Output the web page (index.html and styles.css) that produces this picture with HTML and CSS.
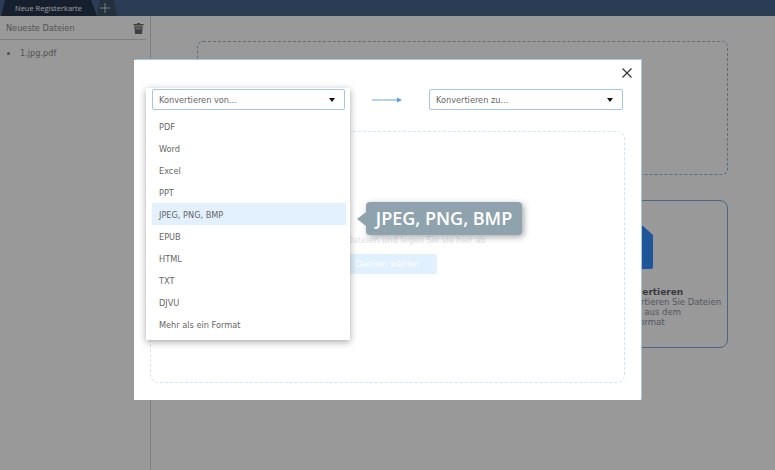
FILE: index.html
```html
<!DOCTYPE html>
<html>
<head>
	<title>Konvertieren</title>
	<link rel="stylesheet" href="styles.css">
</head>
<body>
	<div class="app">
		<div class="tabbar">
			<div class="tab">Neue Registerkarte</div>
			<div class="tab-add">
				<svg width="12" height="12" viewBox="0 0 12 12"><path d="M6 1v10M1 6h10" stroke="#c6d0de" stroke-width="1" fill="none"/></svg>
			</div>
		</div>
		<div class="main">
			<div class="sidebar">
				<div class="sidebar-head">
					<span>Neueste Dateien</span>
					<svg width="11" height="12" viewBox="0 0 11 12">
						<path d="M4 1h3v1h3.500v1.500h-10V2H4z" fill="#6c6c6c"/>
						<path d="M1.300 4.200h8.400L9 12H2z" fill="#6c6c6c"/>
						<path d="M2.500 5.200h6l-.2 2.300h-5.600z" fill="#a4a4a4"/>
					</svg>
				</div>
				<ul class="recent">
					<li>1.jpg.pdf</li>
				</ul>
			</div>
			<div class="content">
				<div class="dropbox"></div>
				<div class="card">
					<svg class="card-icon" width="40" height="43" viewBox="0 0 40 43"><path d="M2 0h28l10 9v32a2 2 0 0 1-2 2H2a2 2 0 0 1-2-2V2a2 2 0 0 1 2-2z" fill="#3390ff"/></svg>
					<div class="card-text">
						<b>Konvertieren</b>
						<span>Konvertieren Sie Dateien</span>
						<span>in und aus dem</span>
						<span>PDF-Format</span>
					</div>
				</div>
			</div>
		</div>
	</div>

	<div class="overlay">
		<div class="modal">
			<svg class="close" width="10" height="10" viewBox="0 0 10 10"><path d="M.5.500l9 9M9.500.500l-9 9" stroke="#333" stroke-width="1.200" fill="none"/></svg>
			<div class="pickers">
				<div class="picker picker-open"><span>Konvertieren von...</span><i class="caret"></i></div>
				<svg width="30" height="6" viewBox="0 0 30 6"><path d="M0 3h26" stroke="#6aa6dc" stroke-width="1"/><path d="M25 .500L30 3l-5 2.500z" fill="#5b9fdc"/></svg>
				<div class="picker"><span>Konvertieren zu...</span><i class="caret"></i></div>
			</div>
			<div class="drop">
				<p>Ziehen Sie Dateien und legen Sie sie hier ab</p>
				<button class="choose">Dateien wählen</button>
			</div>

			<ul class="menu">
				<li>PDF</li>
				<li>Word</li>
				<li>Excel</li>
				<li>PPT</li>
				<li class="active">JPEG, PNG, BMP</li>
				<li>EPUB</li>
				<li>HTML</li>
				<li>TXT</li>
				<li>DJVU</li>
				<li>Mehr als ein Format</li>
			</ul>
			<div class="tip">JPEG, PNG, BMP</div>
		</div>
	</div>
</body>
</html>
```

FILE: styles.css
```css
* {
	box-sizing: border-box;
}
html, body {
	height: 100%;
	margin: 0;
	padding: 0;
	overflow: hidden;
}
body {
	background-color: #fff;
	font-family: "DejaVu Sans", sans-serif;
	font-size: 8.200px;
	color: #666;
}
ul {
	list-style: none;
	margin: 0;
	padding: 0;
}

/* window chrome */
.app {
	height: 100%;
	display: flex;
	flex-direction: column;
}
.tabbar {
	height: 16px;
	flex: none;
	background-color: #48668e;
	display: flex;
	padding-left: 1px;
}
.tab {
	width: 96px;
	background-color: #24344c;
	color: #fff;
	font-family: "Open Sans", sans-serif;
	font-size: 7.500px;
	line-height: 16px;
	padding-left: 14px;
	clip-path: polygon(4px 0, 90px 0, 96px 100%, 0 100%);
}
.tab-add {
	width: 20px;
	background-color: #3e5068;
	display: flex;
	align-items: center;
	justify-content: center;
	padding-right: 4px;
	clip-path: polygon(3px 0, 17px 0, 20px 100%, 0 100%);
}
.main {
	flex: 1;
	display: flex;
}

/* recent files */
.sidebar {
	width: 151px;
	flex: none;
	border-right: 1px solid #d4d4d4;
	padding-right: 4px;
}
.sidebar-head {
	height: 24px;
	display: flex;
	align-items: center;
	justify-content: space-between;
	padding: 0 2px 0 6px;
	border-bottom: 1px solid #d4d4d4;
	color: #8c8c8c;
}
.recent {
	padding: 7px 0 0 20px;
	color: #8c8c8c;
}
.recent li {
	position: relative;
	line-height: 13px;
}
.recent li::before {
	content: "";
	position: absolute;
	left: -13px;
	top: 5px;
	width: 3px;
	height: 3px;
	border-radius: 50%;
	background-color: #808080;
}

.content {
	flex: 1;
	padding: 25px 47px 0 46px;
}
.dropbox {
	height: 134px;
	border: 1px dashed #8fb9e0;
	border-radius: 6px;
}
.card {
	width: 257px;
	height: 148px;
	margin: 25px 0 0 auto;
	border: 1px solid #7aaee0;
	border-radius: 8px;
	padding: 25px 0 0 141px;
	font-size: 8.500px;
	color: #8a92a6;
}
.card-icon {
	display: block;
}
.card-text {
	margin: 18px 0 0 2px;
	line-height: 10px;
	white-space: nowrap;
}
.card-text b {
	display: block;
	font-size: 9px;
	margin-left: 2px;
	color: #5c5c6c;
}
.card-text span {
	display: block;
}

/* dialog */
.overlay {
	position: absolute;
	top: 0;
	left: 0;
	right: 0;
	bottom: 0;
	background-color: rgba(0, 0, 0, 0.4);
	display: flex;
	justify-content: center;
	padding-top: 60px;
}
.modal {
	position: relative;
	width: 507px;
	height: 340px;
	background-color: #fff;
	box-shadow: 1px -1px 0 #a9c5df;
	padding: 29px 16px 17px;
}
.close {
	position: absolute;
	top: 8px;
	right: 9px;
}
.pickers {
	display: flex;
	align-items: center;
	justify-content: space-between;
	padding: 0 2px;
}
.picker {
	width: 194px;
	height: 21px;
	display: flex;
	align-items: center;
	justify-content: space-between;
	padding: 0 9px 0 6px;
	border: 1px solid #a5c6e6;
	border-radius: 2px;
	background-color: #fff;
}
.picker-open {
	width: 193px;
	position: relative;
	z-index: 2;
}
.caret {
	width: 0;
	height: 0;
	border-left: 3.500px solid transparent;
	border-right: 3.500px solid transparent;
	border-top: 4px solid #111;
}
.drop {
	height: 252px;
	margin-top: 21px;
	border: 1px dashed #cfe5f2;
	border-radius: 8px;
	display: flex;
	flex-direction: column;
	align-items: center;
	padding-top: 102px;
}
.drop p {
	margin: 0 0 0 10px;
	font-size: 8.400px;
	line-height: 12px;
	color: #dde3e8;
}
.choose {
	width: 98px;
	height: 20px;
	margin-top: 8px;
	border: 0;
	border-radius: 2px;
	background-color: #e0f0fe;
	color: #fff;
	font: inherit;
}

/* format dropdown and its hover label */
.menu {
	position: absolute;
	top: 28px;
	left: 12px;
	width: 204px;
	height: 252px;
	padding: 27px 4px 0 6px;
	background-color: #fff;
	box-shadow: 0 2px 7px rgba(0, 0, 0, 0.35);
	z-index: 1;
}
.menu li {
	height: 22px;
	line-height: 24px;
	padding-left: 7px;
}
.menu .active {
	background-color: #e2f1fd;
}
.tip {
	position: absolute;
	top: 142px;
	left: 232px;
	width: 156px;
	height: 33px;
	border-radius: 4px;
	background-color: #8fa3ae;
	box-shadow: 2px 2px 6px rgba(0, 0, 0, 0.35);
	color: #fff;
	font-family: "Open Sans", sans-serif;
	font-size: 18px;
	font-weight: 550;
	line-height: 33px;
	text-align: center;
	z-index: 3;
}
.tip::before {
	content: "";
	position: absolute;
	left: -9px;
	top: 10px;
	border-top: 7px solid transparent;
	border-bottom: 7px solid transparent;
	border-right: 9px solid #8fa3ae;
}
```
